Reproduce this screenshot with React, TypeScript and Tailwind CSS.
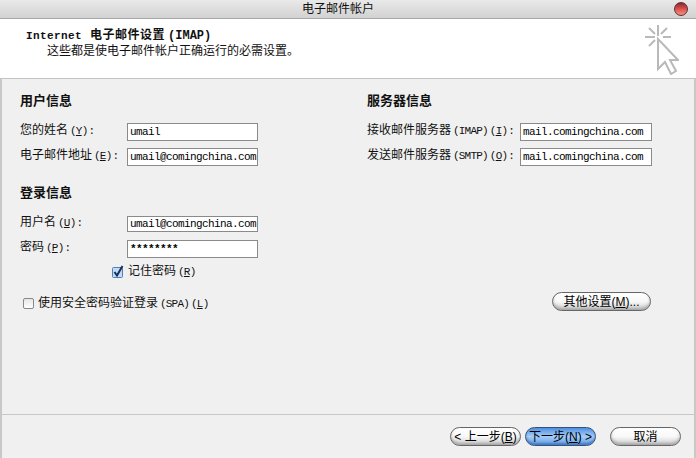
const cjk = "font-['Liberation_Sans','Noto_Sans_CJK_SC',sans-serif]";
const mono = "font-['Liberation_Mono',monospace]";

function Field({ value, wide, short, bold }: { value: string; wide?: boolean; short?: boolean; bold?: boolean }) {
  return (
    <div
      className={`flex items-center border border-[#8a8a8a] bg-white pl-[2px] ${mono} text-[11px] tracking-[-0.6px] text-black ${
        wide ? "w-[132px]" : "w-[131px]"
      } ${short ? "h-[16px]" : "h-[18px]"} ${bold ? "font-bold" : ""}`}
    >
      {value}
    </div>
  );
}

// latin part of a label is narrow and monospaced, the access key is underlined
function Label({ zh, latin, accessKey, colon = true }: { zh: string; latin?: string; accessKey: string; colon?: boolean }) {
  return (
    <span className="whitespace-nowrap text-[12px] leading-none text-[#111]">
      {zh}
      <span className={`${mono} ml-[2px] text-[11px] tracking-[-0.8px]`}>
        {latin && <span className="mr-[2px]">{latin}</span>}(<span className="underline">{accessKey}</span>)
        {colon && <span className="ml-[1px]">:</span>}
      </span>
    </span>
  );
}

function Row({
  label,
  value,
  labelWidth,
  wide,
  short,
  bold,
}: {
  label: React.ReactNode;
  value: string;
  labelWidth: string;
  wide?: boolean;
  short?: boolean;
  bold?: boolean;
}) {
  return (
    <div className="flex items-center">
      <div className={`${labelWidth} -mt-[6px] shrink-0 leading-none`}>{label}</div>
      <Field value={value} wide={wide} short={short} bold={bold} />
    </div>
  );
}

function Heading({ children }: { children: string }) {
  return <div className="text-[13px] font-bold leading-[14px] text-[#111]">{children}</div>;
}

function PillButton({ children, width, primary }: { children: React.ReactNode; width: string; primary?: boolean }) {
  return (
    <div
      className={`flex h-[19px] items-center justify-center rounded-full border text-[12px] leading-none text-black ${width} ${
        primary
          ? "border-[#34527f] bg-gradient-to-b from-[#4f8fe0] via-[#a5cdf8] to-[#5c9ce6] shadow-[inset_0_-2px_2px_rgba(40,80,140,0.45)]"
          : "border-[#666] bg-gradient-to-b from-white via-[#f8f8f8] to-[#cfcfcf] shadow-[inset_0_-2px_3px_rgba(110,110,110,0.45)]"
      }`}
    >
      {children}
    </div>
  );
}

function CursorIcon() {
  return (
    <svg width="36" height="50" viewBox="0 0 36 50" fill="none" stroke="#b9b9b9" strokeWidth="2">
      <path d="M15 0v11M2 12h10M20 12h8M6 3l6 6M24 3l-6 6M6 21l6-6" />
      <path d="M15 14v30l7-7 6 12 5-3-6-11h8z" fill="#fff" />
    </svg>
  );
}

export default function App() {
  return (
    <div className={`flex h-[458px] w-[696px] flex-col overflow-hidden bg-[#f0f0f0] ${cjk}`}>
      <div className="relative flex h-[19px] shrink-0 items-center justify-center border-b border-[#a8a8a8] bg-gradient-to-b from-[#e9e9e9] to-[#d2d2d2] pr-[20px] text-[12px] leading-none text-[#111]">
        电子邮件帐户
        <div className="absolute left-[674px] top-[2px] h-[14px] w-[14px] rounded-full border border-[#5a3030] bg-gradient-to-b from-[#8a2a2a] via-[#e05050] to-[#f09080]" />
      </div>

      <div className="flex h-[60px] shrink-0 justify-between border-b border-[#c4c4c4] bg-white pl-[26px] pr-[17px]">
        <div className="pt-[9px] text-[12px] leading-[15px] text-[#111]">
          <div className="font-bold">
            <span className={`${mono} text-[11px] tracking-[0.4px]`}>Internet</span>
            <span className="ml-[8px] tracking-[0.5px]">电子邮件设置</span>
            <span className={`${mono} ml-[3px] text-[12px]`}>(IMAP)</span>
          </div>
          <div className="pl-[21px]">这些都是使电子邮件帐户正确运行的必需设置。</div>
        </div>
        <div className="pt-[6px]">
          <CursorIcon />
        </div>
      </div>

      <div className="flex flex-1 flex-col border-x-2 border-[#c8c8c8]">
        <div className="flex h-[335px] shrink-0 justify-between pl-[18px] pr-[42px] pt-[15px]">
          <div className="flex flex-col">
            <Heading>用户信息</Heading>
            <div className="mt-[15px] flex flex-col gap-[7px]">
              <Row label={<Label zh="您的姓名" accessKey="Y" />} value="umail" labelWidth="w-[107px]" />
              <Row label={<Label zh="电子邮件地址" accessKey="E" />} value="umail@comingchina.com" labelWidth="w-[107px]" />
            </div>
            <div className="mt-[20px]">
              <Heading>登录信息</Heading>
            </div>
            <div className="mt-[16px] flex flex-col gap-[8px]">
              <Row label={<Label zh="用户名" accessKey="U" />} value="umail@comingchina.com" labelWidth="w-[107px]" short />
              <Row label={<Label zh="密码" accessKey="P" />} value="********" labelWidth="w-[107px]" bold />
            </div>
            <div className="ml-[92px] mt-[7px] flex items-center gap-[4px]">
              <svg width="12" height="13" viewBox="0 0 12 13" className="shrink-0">
                <rect x="0.5" y="2.5" width="10" height="10" rx="1" fill="#c4d9f2" stroke="#4f7fb8" />
                <path d="M2.5 7l2.5 3.5L10.5 1" fill="none" stroke="#12305a" strokeWidth="2" />
              </svg>
              <Label zh="记住密码" accessKey="R" colon={false} />
            </div>
            <div className="ml-[3px] mt-[19px] flex items-center gap-[4px]">
              <div className="h-[11px] w-[11px] shrink-0 rounded-[2px] border border-[#888] bg-gradient-to-b from-[#e6e6e6] to-white" />
              <Label zh="使用安全密码验证登录" latin="(SPA)" accessKey="L" colon={false} />
            </div>
          </div>

          <div className="flex flex-col justify-between">
            <div className="flex flex-col">
              <Heading>服务器信息</Heading>
              <div className="mt-[15px] flex flex-col gap-[7px]">
                <Row
                  label={<Label zh="接收邮件服务器" latin="(IMAP)" accessKey="I" />}
                  value="mail.comingchina.com"
                  labelWidth="w-[153px]"
                  wide
                />
                <Row
                  label={<Label zh="发送邮件服务器" latin="(SMTP)" accessKey="O" />}
                  value="mail.comingchina.com"
                  labelWidth="w-[153px]"
                  wide
                />
              </div>
            </div>
            <div className="mb-[103px] mr-[1px] flex justify-end">
              <PillButton width="w-[99px]">
                <span>
                  其他设置(<span className="underline">M</span>)...
                </span>
              </PillButton>
            </div>
          </div>
        </div>

        <div className="h-px shrink-0 bg-[#c8c8c8]" />

        <div className="flex justify-end gap-[4px] pr-[13px] pt-[12px]">
          <PillButton width="w-[71px]">
            <span>
              &lt; 上一步(<span className="underline">B</span>)
            </span>
          </PillButton>
          <PillButton width="w-[71px]" primary>
            <span>
              下一步(<span className="underline">N</span>) &gt;
            </span>
          </PillButton>
          <div className="ml-[10px]">
            <PillButton width="w-[71px]">取消</PillButton>
          </div>
        </div>
      </div>
    </div>
  );
}
